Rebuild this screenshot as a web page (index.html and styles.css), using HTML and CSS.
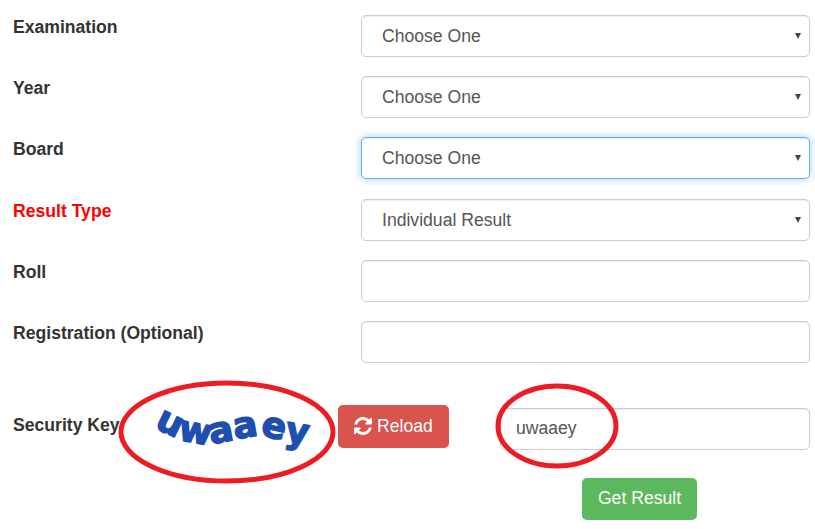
FILE: index.html
```html
<!DOCTYPE html>
<html lang="en">
<head>
    <meta charset="UTF-8">
    <title>Result</title>
    <link rel="stylesheet" href="styles.css">
</head>
<body>
    <form class="result-form">
        <div class="row">
            <label class="row-label">Examination</label>
            <div class="select-box">
                <select class="control"><option>Choose One</option></select>
            </div>
        </div>
        <div class="row">
            <label class="row-label">Year</label>
            <div class="select-box">
                <select class="control"><option>Choose One</option></select>
            </div>
        </div>
        <div class="row">
            <label class="row-label">Board</label>
            <div class="select-box">
                <select class="control focused"><option>Choose One</option></select>
            </div>
        </div>
        <div class="row">
            <label class="row-label red">Result Type</label>
            <div class="select-box">
                <select class="control"><option>Individual Result</option></select>
            </div>
        </div>
        <div class="row">
            <label class="row-label">Roll</label>
            <input class="control" type="text">
        </div>
        <div class="row">
            <label class="row-label">Registration (Optional)</label>
            <input class="control" type="text">
        </div>
        <div class="security-row">
            <label class="security-label">Security Key</label>
            <svg class="captcha" width="220" height="70" viewBox="0 0 220 70">
                <path id="captcha-curve" d="M36 34 C55 44 75 54 100 50 C125 46 135 40 155 45 C175 50 190 54 210 50" fill="none"/>
                <text class="captcha-text"><textPath href="#captcha-curve">uwaaey</textPath></text>
            </svg>
            <button type="button" class="btn btn-reload">
                <svg class="reload-icon" width="18" height="18" viewBox="0 0 1536 1536"><path fill="#fff" d="M1511 928q0 5-1 7-64 268-268 434.5t-478 166.5q-146 0-282.5-55t-243.5-157l-129 129q-19 19-45 19t-45-19-19-45v-448q0-26 19-45t45-19h448q26 0 45 19t19 45-19 45l-137 137q71 66 161 102t187 36q134 0 250-65t186-179q11-17 53-117 8-23 30-23h192q13 0 22.5 9.5t9.5 22.5zm25-800v448q0 26-19 45t-45 19h-448q-26 0-45-19t-19-45 19-45l138-138q-148-137-349-137-134 0-250 65t-186 179q-11 17-53 117-8 23-30 23h-199q-13 0-22.5-9.5t-9.5-22.5v-7q65-268 270-434.5t480-166.5q146 0 284 55.5t245 156.5l130-129q19-19 45-19t45 19 19 45z"/></svg>
                Reload
            </button>
            <input class="control key-input" type="text" value="uwaaey">
        </div>
        <div class="submit-row">
            <button type="submit" class="btn btn-submit">Get Result</button>
        </div>
    </form>
    <svg class="marks" width="815" height="529" viewBox="0 0 815 529">
        <ellipse cx="227" cy="432" rx="106" ry="49" fill="none" stroke="#ed1c24" stroke-width="5"/>
        <ellipse cx="557" cy="426" rx="59" ry="40" fill="none" stroke="#ed1c24" stroke-width="5"/>
    </svg>
</body>
</html>
```

FILE: styles.css
```css
*
{
    box-sizing: border-box;
}
html, body
{
    height: 529px;
    overflow: hidden;
}
body
{
    margin: 0;
    background: #fff;
    color: #333;
    font-family: "Liberation Sans", Arial, sans-serif;
    font-size: 17.6px;
}
.result-form
{
    padding: 15px 5px 0 13px;
}
.row
{
    display: flex;
    margin-bottom: 19.2px;
    height: 42px;
}
.row-label
{
    width: 348px;
    flex: none;
    font-weight: bold;
    line-height: 24px;
}
.red
{
    color: #f00;
}
.control
{
    width: 449px;
    height: 42px;
    border: 1px solid #ccc;
    border-radius: 5px;
    background: #fff;
    color: #555;
    font-family: inherit;
    font-size: 17.6px;
    padding: 0 20px;
    box-shadow: inset 0 1px 1px rgba(0, 0, 0, .075);
    appearance: none;
    outline: none;
}
.control.focused
{
    border-color: #66afe9;
    box-shadow: inset 0 1px 1px rgba(0, 0, 0, .075), 0 0 8px rgba(102, 175, 233, .6);
}
.select-box
{
    position: relative;
    width: 449px;
}
.select-box::after
{
    content: "";
    position: absolute;
    top: 18px;
    right: 9px;
    border-left: 3.5px solid transparent;
    border-right: 3.5px solid transparent;
    border-top: 6px solid #444;
}
.security-row
{
    display: flex;
    align-items: flex-start;
    margin-top: 42px;
    height: 73px;
}
.security-label
{
    width: 105px;
    flex: none;
    font-weight: bold;
    line-height: 24px;
    margin-top: 8px;
    white-space: nowrap;
}
.captcha
{
    flex: none;
    margin-top: -12px;
}
.captcha-text
{
    font-family: "DejaVu Sans", sans-serif;
    font-size: 36px;
    font-weight: bold;
    fill: #1e4fb0;
    stroke: #1e4fb0;
    stroke-width: 1.5px;
    stroke-linejoin: round;
    letter-spacing: .5px;
}
.btn
{
    border: 0;
    border-radius: 5px;
    color: #fff;
    font-family: inherit;
    font-size: 17.6px;
    padding: 0;
}
.btn-reload
{
    flex: none;
    width: 111px;
    height: 43px;
    background: #d9534f;
    display: flex;
    align-items: center;
    justify-content: center;
    gap: 5px;
}
.key-input
{
    flex: none;
    width: 310px;
    margin: 3px 0 0 51px;
    padding: 0 15px;
}
.submit-row
{
    padding-left: 569px;
}
.btn-submit
{
    width: 115px;
    height: 42px;
    background: #5cb85c;
}
.marks
{
    position: absolute;
    top: 0;
    left: 0;
    pointer-events: none;
}
```
